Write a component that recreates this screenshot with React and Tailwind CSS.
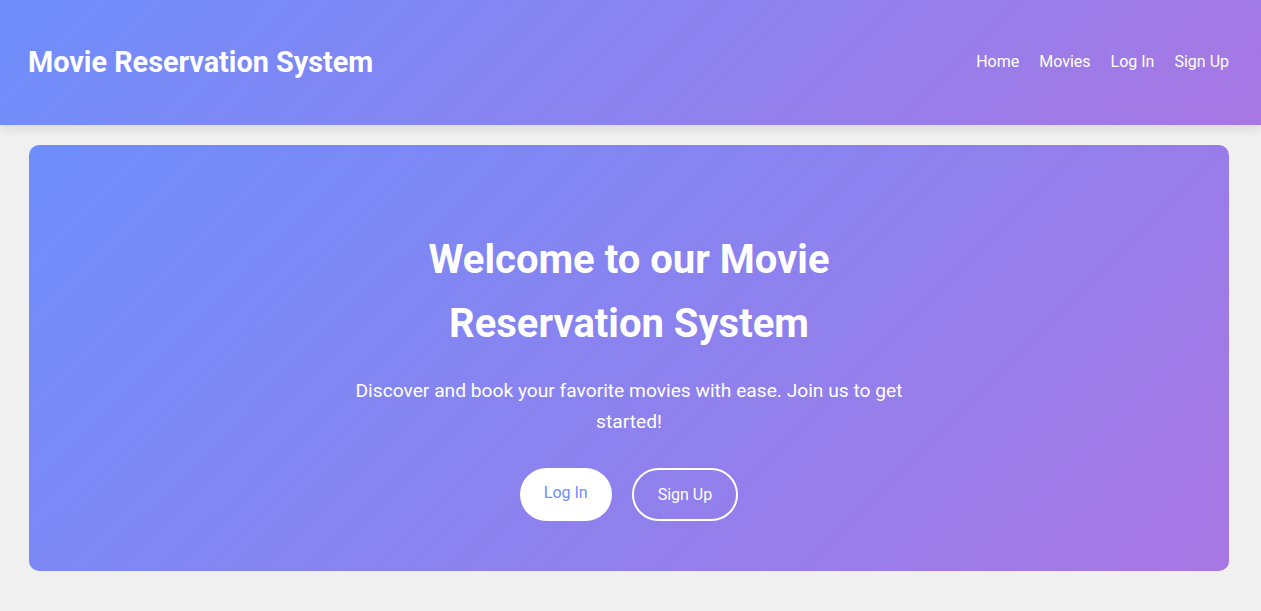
export default function App() {
  const font = { fontFamily: "Roboto, 'Noto Sans', sans-serif" };
  return (
    <div className="min-h-[611px] bg-[#f0f0f0]" style={font}>
      <header className="h-[125px] flex items-center justify-between pl-7 pr-8 bg-[linear-gradient(135deg,#6e8efb,#a777e3)] shadow-[0_2px_12px_rgba(0,0,0,0.12)] relative z-10">
        <h1 className="text-[28.8px] font-bold text-white leading-none">Movie Reservation System</h1>
        <nav className="flex items-center gap-5 text-white text-base -mt-[2px]">
          <a>Home</a>
          <a>Movies</a>
          <a>Log In</a>
          <a>Sign Up</a>
        </nav>
      </header>
      <main className="px-[29px] pt-5">
        <section className="max-w-[1200px] rounded-[10px] bg-[linear-gradient(135deg,#6e8efb,#a777e3)] pt-[83px] pb-[50px] flex flex-col items-center text-center text-white">
          <h2 className="max-w-[600px] text-[40px] font-bold leading-[64px]">Welcome to our Movie Reservation System</h2>
          <p className="max-w-[600px] mt-[19px] text-[19.2px] leading-[31px]">Discover and book your favorite movies with ease. Join us to get started!</p>
          <div className="flex gap-5 mt-[31px]">
            <button className="h-[53px] px-6 pb-[4px] rounded-full bg-white text-[#6e8efb] text-base">Log In</button>
            <button className="h-[53px] px-6 pt-[1px] rounded-full border-2 border-white text-white text-base">Sign Up</button>
          </div>
        </section>
      </main>
    </div>
  );
}
